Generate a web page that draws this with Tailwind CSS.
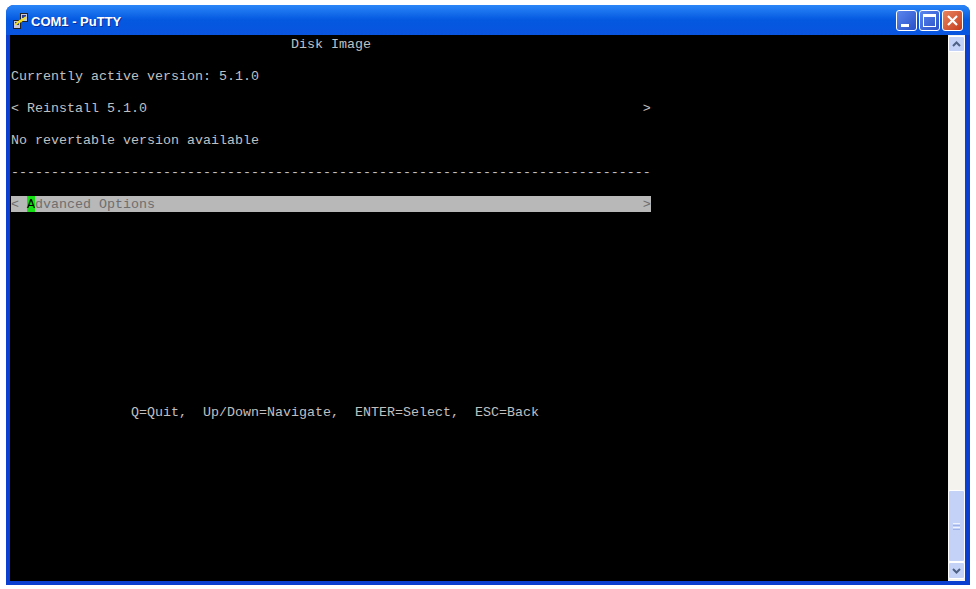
<!DOCTYPE html>
<html><head><meta charset="utf-8"><script src="https://cdn.jsdelivr.net/npm/@tailwindcss/browser@4"></script></head>
<body class="bg-white m-0">
<div class="w-[976px] h-[589px] pt-[5px] pl-[6px] bg-white overflow-hidden">
<div class="w-[964px] h-[580px] flex flex-col rounded-t-[8px] bg-[#0a3fd0] overflow-hidden">
  <div class="h-[30px] shrink-0 flex items-center pl-[6px] pr-[7px] pt-[2px] bg-gradient-to-b from-[#2a86f8] via-[#0458e0] to-[#0a55e0]">
    <svg width="18" height="18" viewBox="0 0 18 18" class="shrink-0">
      <rect x="8.500" y="1.500" width="7" height="8" fill="#c8c8d8" stroke="#222"/>
      <rect x="1.500" y="8.500" width="7" height="8" fill="#c8c8d8" stroke="#222"/>
      <rect x="10" y="3" width="4" height="3" fill="#2a3f90"/>
      <rect x="3" y="10" width="4" height="3" fill="#2a3f90"/>
      <path d="M3 13 L9 8 L8 10 L14 5" fill="none" stroke="#f5e020" stroke-width="2"/>
    </svg>
    <span class="ml-[1px] text-white text-[13px] font-bold leading-none font-['Liberation_Sans',sans-serif] [text-shadow:1px_1px_0_#0a2f9a]">COM1 - PuTTY</span>
    <div class="ml-auto flex gap-[2px] mb-[2px]">
      <div class="w-[21px] h-[21px] rounded-[3px] border border-white bg-gradient-to-br from-[#5b86ee] to-[#2a50c8] flex items-end pl-[4px] pb-[3px]"><div class="w-[8px] h-[3px] bg-white"></div></div>
      <div class="w-[21px] h-[21px] rounded-[3px] border border-white bg-gradient-to-br from-[#5b86ee] to-[#2a50c8] flex items-center justify-center"><div class="w-[13px] h-[13px] border border-white border-t-[3px]"></div></div>
      <div class="w-[21px] h-[21px] rounded-[3px] border border-white bg-gradient-to-br from-[#e8835f] to-[#c43a18] flex items-center justify-center">
        <svg width="13" height="13" viewBox="0 0 13 13"><path d="M2 2 L11 11 M11 2 L2 11" stroke="#fff" stroke-width="2.200"/></svg>
      </div>
    </div>
  </div>
  <div class="flex-1 min-h-0 flex pl-[4px] pr-[5px] pb-[4px]">
    <div class="flex-1 min-w-0 bg-black pl-[1px] pt-[1px] text-[#c0c0c0] text-[13.33px] leading-[18px] font-['Liberation_Mono',monospace] whitespace-pre [&>div]:h-[16px]"><div>                                   Disk Image</div><div> </div><div>Currently active version: 5.1.0</div><div> </div><div>&lt; Reinstall 5.1.0                                                              &gt;</div><div> </div><div>No revertable version available</div><div> </div><div>--------------------------------------------------------------------------------</div><div> </div><div class="w-[640px] bg-[#b8b8b8] text-[#6e6e6e]">&lt; <span class="inline-block h-[16px] bg-[#14e014] text-black">A</span>dvanced Options                                                             &gt;</div><div> </div><div> </div><div> </div><div> </div><div> </div><div> </div><div> </div><div> </div><div> </div><div> </div><div> </div><div> </div><div>               Q=Quit,  Up/Down=Navigate,  ENTER=Select,  ESC=Back</div></div>
    <div class="w-[17px] shrink-0 flex flex-col bg-[#f4f3ee] pb-[2px]">
      <div class="h-[16px] mt-[1px] shrink-0 rounded-[2px] border border-white bg-[#c4d2f8] flex items-center justify-center"><svg width="9" height="6" viewBox="0 0 9 6"><path d="M1 5 L4.500 1.500 L8 5" fill="none" stroke="#4d6185" stroke-width="2"/></svg></div>
      <div class="flex-1"></div>
      <div class="h-[72px] shrink-0 rounded-[2px] border border-white bg-[#c4d2f8] flex flex-col items-center justify-center gap-[1px]"><div class="w-[7px] h-px bg-[#eef2ff]"></div><div class="w-[7px] h-px bg-[#9fb3e8]"></div><div class="w-[7px] h-px bg-[#eef2ff]"></div><div class="w-[7px] h-px bg-[#9fb3e8]"></div></div>
      <div class="h-[17px] shrink-0 rounded-[2px] border border-white bg-[#c4d2f8] flex items-center justify-center"><svg width="9" height="6" viewBox="0 0 9 6"><path d="M1 1 L4.500 4.500 L8 1" fill="none" stroke="#4d6185" stroke-width="2"/></svg></div>
    </div>
  </div>
</div>
</div>
</body></html>
